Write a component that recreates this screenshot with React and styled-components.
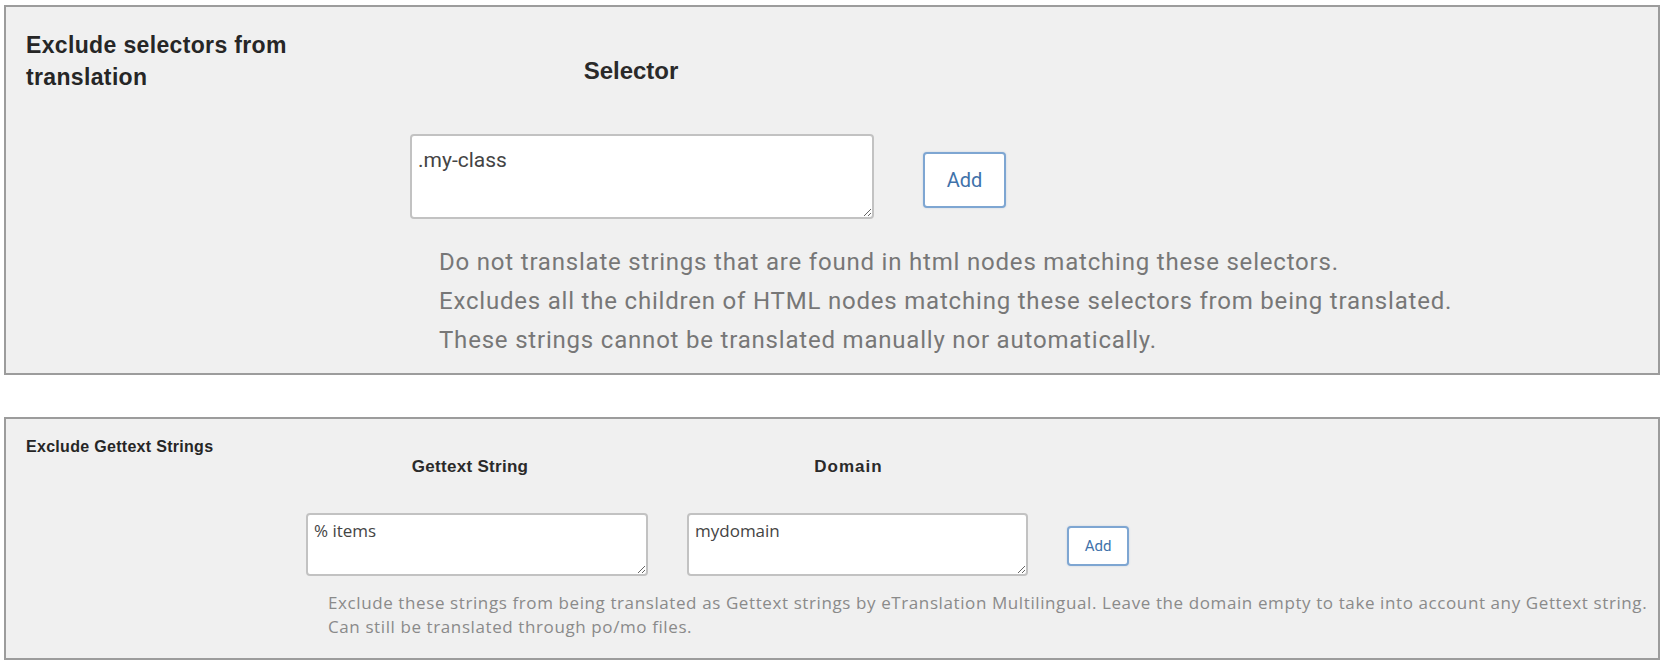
import React from 'react';
import styled, { createGlobalStyle } from 'styled-components';

const GlobalStyle = createGlobalStyle`
  html, body {
    margin: 0;
    padding: 0;
    background: #ffffff;
  }
  body {
    font-family: Roboto, 'Liberation Sans', Arial, sans-serif;
  }
`;

// --- Layout ---
const Page = styled.div`
  display: flex;
  flex-direction: column;
  gap: 42px;
  padding: 5px 8px 0 4px;
`;

const Panel = styled.section`
  display: flex;
  background: #f0f0f0;
  border: 2px solid #9c9c9c;
  padding-bottom: ${p => p.$padBottom}px;
`;

const Label = styled.h3`
  margin: 0;
  box-sizing: border-box;
  flex: 0 0 ${p => p.$width}px;
  padding: ${p => p.$top}px 0 0 20px;
  font-family: 'Liberation Sans', Arial, sans-serif;
  font-weight: bold;
  font-size: ${p => p.$size}px;
  line-height: ${p => p.$lineHeight}px;
  color: #262626;
  letter-spacing: ${p => p.$tracking || 0}px;
`;

const Content = styled.div`
  display: flex;
  flex-direction: column;
  padding-top: ${p => p.$top}px;
`;

const FieldGrid = styled.div`
  display: grid;
  grid-template-columns: ${p => p.$columns};
  column-gap: ${p => p.$gap}px;
  row-gap: ${p => p.$rowGap}px;
  align-items: center;
`;

const ColumnHead = styled.div`
  text-align: center;
  padding-right: ${p => p.$offset || 0}px;
  font-family: 'Liberation Sans', Arial, sans-serif;
  font-weight: bold;
  font-size: ${p => p.$size}px;
  line-height: ${p => p.$lineHeight}px;
  color: #2a2a2a;
  letter-spacing: ${p => p.$tracking || 0}px;
`;

const Field = styled.textarea`
  box-sizing: border-box;
  width: 100%;
  height: ${p => p.$height}px;
  margin: 0;
  padding: ${p => p.$padTop}px 6px 0 6px;
  background: #ffffff;
  border: ${p => p.$border}px solid #c2c2c2;
  border-radius: 4px;
  font-family: ${p => p.$font};
  font-size: ${p => p.$size}px;
  line-height: ${p => p.$lineHeight}px;
  color: #444444;
  outline: none;
`;

const AddButton = styled.button`
  box-sizing: border-box;
  width: ${p => p.$width}px;
  height: ${p => p.$height}px;
  margin-top: ${p => p.$shift || 0}px;
  background: #ffffff;
  border: 2px solid #7ea6d2;
  border-radius: 4px;
  font-family: Roboto, 'Liberation Sans', Arial, sans-serif;
  font-size: ${p => p.$size}px;
  color: #3f72aa;
  cursor: pointer;
  box-shadow: 0 0 2px rgba(70, 120, 180, 0.25);
`;

const Description = styled.div`
  margin: ${p => p.$top}px 0 0 ${p => p.$indent}px;
  font-family: ${p => p.$font};
  font-size: ${p => p.$size}px;
  line-height: ${p => p.$lineHeight}px;
  letter-spacing: ${p => p.$tracking || 0}px;
  color: ${p => p.$color};
  white-space: nowrap;

  p {
    margin: 0;
  }
`;

const Spacer = styled.div``;

// --- App ---
export default function App() {
  return (
    <>
      <GlobalStyle />
      <Page>
        <Panel $padBottom={13}>
          <Label $width={404} $top={22} $size={23} $lineHeight={32} $tracking={0.35}>
            Exclude selectors from
            <br />
            translation
          </Label>
          <Content $top={51}>
            <FieldGrid $columns="464px auto" $gap={49} $rowGap={51}>
              <ColumnHead $size={24} $lineHeight={25} $offset={22}>Selector</ColumnHead>
              <Spacer />
              <Field
                $height={85}
                $padTop={12}
                $border={2}
                $font="Roboto, 'Liberation Sans', Arial, sans-serif"
                $size={21}
                $lineHeight={24}
                defaultValue=".my-class"
              />
              <AddButton $width={83} $height={56} $size={20} $shift={7}>
                Add
              </AddButton>
            </FieldGrid>
            <Description
              $top={24}
              $indent={29}
              $font="Roboto, 'Liberation Sans', Arial, sans-serif"
              $size={24}
              $tracking={0.8}
              $lineHeight={39}
              $color="#777777"
            >
              <p>Do not translate strings that are found in html nodes matching these selectors.</p>
              <p>Excludes all the children of HTML nodes matching these selectors from being translated.</p>
              <p>These strings cannot be translated manually nor automatically.</p>
            </Description>
          </Content>
        </Panel>

        <Panel $padBottom={20}>
          <Label $width={300} $top={19} $size={16} $lineHeight={18} $tracking={0.3}>
            Exclude Gettext Strings
          </Label>
          <Content $top={39}>
            <FieldGrid $columns="342px 341px auto" $gap={39} $rowGap={37}>
              <ColumnHead $size={17} $lineHeight={18} $tracking={0.3} $offset={14}>Gettext String</ColumnHead>
              <ColumnHead $size={17} $lineHeight={18} $tracking={1} $offset={18}>Domain</ColumnHead>
              <Spacer />
              <Field
                $height={63}
                $padTop={6}
                $border={2}
                $font="'Open Sans', 'Liberation Sans', Arial, sans-serif"
                $size={17}
                $lineHeight={20}
                defaultValue="% items"
              />
              <Field
                $height={63}
                $padTop={6}
                $border={2}
                $font="'Open Sans', 'Liberation Sans', Arial, sans-serif"
                $size={17}
                $lineHeight={20}
                defaultValue="mydomain"
              />
              <AddButton $width={62} $height={40} $size={15} $shift={2}>
                Add
              </AddButton>
            </FieldGrid>
            <Description
              $top={15}
              $indent={22}
              $font="'Open Sans', 'Liberation Sans', Arial, sans-serif"
              $size={17}
              $tracking={0.6}
              $lineHeight={23.5}
              $color="#8a8a8a"
            >
              <p>
                Exclude these strings from being translated as Gettext strings by eTranslation Multilingual. Leave the
                domain empty to take into account any Gettext string.
              </p>
              <p>Can still be translated through po/mo files.</p>
            </Description>
          </Content>
        </Panel>
      </Page>
    </>
  );
}
